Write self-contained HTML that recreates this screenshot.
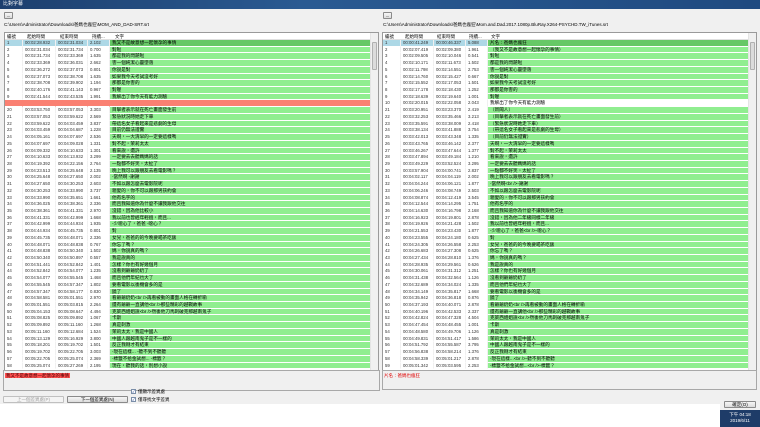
<!DOCTYPE html>
<html><head><meta charset="utf-8">
<style>
*{margin:0;padding:0;box-sizing:border-box}
body{width:760px;height:427px;overflow:hidden;background:#f0f0f0;font-family:"Liberation Sans","Noto Sans CJK TC",sans-serif;font-size:5px;color:#000;position:relative}
.abs{position:absolute}
.title{left:0;top:0;width:760px;height:9px;background:linear-gradient(90deg,#1d3f6e,#2a5a92 40%,#1f4a80);color:#fff;font-size:5px;line-height:9px;padding-left:3px}
.btn{border:1px solid #8a8a8a;border-radius:1px;background:linear-gradient(#f6f6f6,#dcdcdc);text-align:center;line-height:6px;font-size:4.5px}
.path{font-size:4.5px;line-height:6px}
.list{background:#fff;border:1px solid #9a9a9a;overflow:hidden}
table,tbody{display:block;position:absolute;left:0;top:7px}
tbody{position:static}
colgroup{display:none}
tr{display:flex;height:6.72px;overflow:hidden}
td{display:block;flex:none;height:6.72px;line-height:6.2px;font-size:4.3px;white-space:nowrap;overflow:hidden;padding-left:2px;border-right:1px solid #f0f0f0;border-bottom:0.6px solid #fff;color:#333}
td:nth-child(1){width:18px}
td:nth-child(2){width:33px}
td:nth-child(3){width:32px}
td:nth-child(4){width:22px}
td:nth-child(5){width:261px}
td.g{background:#90ee90;color:#000;font-size:4.6px}
tr.sel td{background:#add8e6}
tr.sel td.g{background:#66c866}
tr.red td{background:#fa8072;border-right-color:#fa8072}
tr.w td.g{background:#fff}
.hdr{position:absolute;left:0;top:0;height:7px;width:100%;background:#fff;border-bottom:1px solid #e0e0e0;font-size:4.5px;line-height:7px}
.hdr span{position:absolute;top:0}
.sb{position:absolute;top:0;right:0;width:8px;height:100%;background:#f0f0f0;border-left:1px solid #e4e4e4}
.sb i{position:absolute;left:1px;top:9px;width:5px;height:28px;background:#dcdcdc;border:1px solid #b0b0b0;border-radius:1px}
.box{background:#f0f0f0;border:1px solid #a8a8a8}
.cb{width:5px;height:5px;border:1px solid #7a8ea8;background:#fff;color:#2a4a9a;font-size:4px;line-height:4px;text-align:center}
</style></head><body>
<div class="abs title">比對字幕</div>

<div class="abs btn" style="left:4px;top:12px;width:9px;height:7px">...</div>
<div class="abs path" style="left:4px;top:22px">C:\Users\Administrator\Downloads\爸媽也瘋狂\MOM_AND_DAD-SRT.srt</div>
<div class="abs btn" style="left:383px;top:12px;width:9px;height:7px">...</div>
<div class="abs path" style="left:383px;top:22px">C:\Users\Administrator\Downloads\爸媽也瘋狂\Mom.and.Dad.2017.1080p.BluRay.X264-PSYCHD.TW_iTunes.srt</div>

<!-- Left list -->
<div class="abs list" style="left:4px;top:32px;width:375px;height:339px">
<div class="hdr"><span style="left:2px">編號</span><span style="left:22px">起始時間</span><span style="left:55px">結束時間</span><span style="left:87px">持續...</span><span style="left:110px">文字</span></div>
<table>
<tr class="sel"><td>1<td>00:02:28.932<td>00:02:31.034<td>2.102<td class="g">我又不是故意想一起懷孕的事情</tr>
<tr><td>2<td>00:02:31.034<td>00:02:31.734<td>0.700<td class="g">對啦</tr>
<tr><td>3<td>00:02:31.734<td>00:02:33.369<td>1.635<td class="g">都是我的問題啦</tr>
<tr><td>4<td>00:02:33.369<td>00:02:36.031<td>2.662<td class="g">害一個純潔心靈墮落</tr>
<tr><td>5<td>00:02:36.272<td>00:02:37.073<td>0.801<td class="g">你說是對</tr>
<tr><td>6<td>00:02:37.073<td>00:02:38.708<td>1.635<td class="g">如果我今天考試沒考好</tr>
<tr><td>7<td>00:02:38.708<td>00:02:39.902<td>1.194<td class="g">那都是你害的</tr>
<tr><td>8<td>00:02:40.176<td>00:02:41.143<td>0.967<td class="g">對喔</tr>
<tr><td>9<td>00:02:41.544<td>00:02:43.535<td>1.991<td class="g">我解出了你今天有能力測驗</tr>
<tr class="red"><td><td><td><td><td class="g" style="background:#fa8072"></tr>
<tr><td>20<td>00:03:53.750<td>00:03:57.053<td>3.303<td class="g">目擊者表示就在死亡畫面發生前</tr>
<tr><td>21<td>00:03:57.053<td>00:03:59.622<td>2.569<td class="g">緊急狀況時她走下車</tr>
<tr><td>22<td>00:03:59.622<td>00:04:03.459<td>3.837<td class="g">帶這名女子看起來是悲劇的生母</tr>
<tr><td>23<td>00:04:03.459<td>00:04:04.687<td>1.228<td class="g">目前仍無法證實</tr>
<tr><td>24<td>00:04:05.161<td>00:04:07.697<td>2.536<td class="g">天啊，一大清早的一定要這樣嗎</tr>
<tr><td>25<td>00:04:07.697<td>00:04:09.028<td>1.331<td class="g">對不起，茉莉太太</tr>
<tr><td>26<td>00:04:09.332<td>00:04:10.633<td>1.301<td class="g">看來說，還許</tr>
<tr><td>27<td>00:04:10.633<td>00:04:13.932<td>3.299<td class="g">一定要去去聽媽媽的話</tr>
<tr><td>28<td>00:04:19.392<td>00:04:22.156<td>2.764<td class="g">一點都不好笑，太扯了</tr>
<tr><td>29<td>00:04:23.513<td>00:04:25.648<td>2.135<td class="g">晚上我可以跟朋友去看電影嗎？</tr>
<tr><td>30<td>00:04:25.648<td>00:04:27.650<td>2.002<td class="g">-當然啊 -謝謝</tr>
<tr><td>31<td>00:04:27.650<td>00:04:30.253<td>2.603<td class="g">不如以跟怎麼去電影院呢</tr>
<tr><td>32<td>00:04:30.253<td>00:04:33.990<td>3.737<td class="g">親愛的，你不可以跟那男孩約會</tr>
<tr><td>33<td>00:04:33.990<td>00:04:35.651<td>1.661<td class="g">他有名字的</tr>
<tr><td>34<td>00:04:36.025<td>00:04:38.361<td>2.336<td class="g">而且我知道你為什麼不讓我跟他交往</tr>
<tr><td>35<td>00:04:38.361<td>00:04:41.331<td>2.970<td class="g">沒錯，因為他比較小</tr>
<tr><td>36<td>00:04:41.331<td>00:04:42.999<td>1.668<td class="g">我以前也曾經年輕過，而且...</tr>
<tr><td>37<td>00:04:42.999<td>00:04:44.934<td>1.935<td class="g">-少噁心了，爸爸 -噁心？</tr>
<tr><td>38<td>00:04:44.934<td>00:04:45.735<td>0.801<td class="g">對</tr>
<tr><td>39<td>00:04:45.735<td>00:04:48.071<td>2.336<td class="g">女兒，爸爸的的今晚要喝茶吃飯</tr>
<tr><td>40<td>00:04:48.071<td>00:04:48.838<td>0.767<td class="g">你忘了嗎？</tr>
<tr><td>41<td>00:04:48.838<td>00:04:50.340<td>1.502<td class="g">媽，你說真的嗎？</tr>
<tr><td>42<td>00:04:50.340<td>00:04:50.897<td>0.557<td class="g">我是說真的</tr>
<tr><td>43<td>00:04:51.441<td>00:04:52.842<td>1.401<td class="g">怎樣？你也有好幾個月</tr>
<tr><td>44<td>00:04:52.842<td>00:04:54.077<td>1.235<td class="g">沒看到爺爺奶奶了</tr>
<tr><td>45<td>00:04:54.077<td>00:04:55.545<td>1.468<td class="g">而且他們年紀也大了</tr>
<tr><td>46<td>00:04:55.545<td>00:04:57.347<td>1.802<td class="g">要看電影以後機會多的是</tr>
<tr><td>47<td>00:04:57.347<td>00:04:58.177<td>0.830<td class="g">饒了</tr>
<tr><td>48<td>00:04:58.581<td>00:05:01.551<td>2.970<td class="g">看爺爺奶奶&lt;br /&gt;再看被動的畫面人格在轉折喻</tr>
<tr><td>49<td>00:05:01.551<td>00:05:03.815<td>2.264<td class="g">還有爺爺一直講他&lt;br /&gt;那些精彩的越戰故事</tr>
<tr><td>50<td>00:05:04.153<td>00:05:08.647<td>4.494<td class="g">克萊西姐姐說&lt;br /&gt;然後他刀馬刺破克那越南鬼子</tr>
<tr><td>51<td>00:05:08.825<td>00:05:09.892<td>1.067<td class="g">卡斯</tr>
<tr><td>52<td>00:05:09.892<td>00:05:11.160<td>1.268<td class="g">真是刺激</tr>
<tr><td>53<td>00:05:11.160<td>00:05:12.684<td>1.524<td class="g">茉莉太太，我是中國人</tr>
<tr><td>54<td>00:05:13.129<td>00:05:16.929<td>3.800<td class="g">中國人跟越南鬼子是不一樣的</tr>
<tr><td>55<td>00:05:18.201<td>00:05:19.702<td>1.501<td class="g">反正我剛才有結束</tr>
<tr><td>56<td>00:05:19.702<td>00:05:22.705<td>3.003<td class="g">-現在這樣... -聽不到不聽聽</tr>
<tr><td>57<td>00:05:22.705<td>00:05:25.074<td>2.369<td class="g">-標籤不拾金試想... -標籤？</tr>
<tr><td>58<td>00:05:25.074<td>00:05:27.269<td>2.195<td class="g">現在，聽我的話，別想小說</tr>
</table>
<div class="sb"><i></i></div>
</div>

<!-- Right list -->
<div class="abs list" style="left:382px;top:32px;width:375px;height:339px">
<div class="hdr"><span style="left:2px">編號</span><span style="left:22px">起始時間</span><span style="left:54px">結束時間</span><span style="left:86px">持續...</span><span style="left:108px">文字</span></div>
<table>
<tr class="sel"><td>1<td>00:00:41.249<td>00:00:46.337<td>5.088<td class="g">片名：爸媽也瘋狂</tr>
<tr><td>2<td>00:02:07.419<td>00:02:09.380<td>1.961<td class="g">（我又不是故意想一起懷孕的事情）</tr>
<tr><td>3<td>00:02:09.505<td>00:02:10.046<td>0.541<td class="g">對啦</tr>
<tr><td>4<td>00:02:10.171<td>00:02:11.673<td>1.502<td class="g">都是我的問題啦</tr>
<tr><td>5<td>00:02:11.798<td>00:02:14.551<td>2.753<td class="g">害一個純潔心靈墮落</tr>
<tr><td>6<td>00:02:14.760<td>00:02:15.427<td>0.667<td class="g">你說是對</tr>
<tr><td>7<td>00:02:15.552<td>00:02:17.053<td>1.501<td class="g">如果我今天考試沒考好</tr>
<tr><td>8<td>00:02:17.178<td>00:02:18.430<td>1.252<td class="g">那都是你害的</tr>
<tr><td>9<td>00:02:18.639<td>00:02:19.640<td>1.001<td class="g">對喔</tr>
<tr class="w"><td>10<td>00:02:20.015<td>00:02:22.058<td>2.043<td class="g">我解出了你今天有能力測驗</tr>
<tr><td>21<td>00:03:20.951<td>00:03:23.370<td>2.419<td class="g">（新聞人）</tr>
<tr><td>22<td>00:03:32.253<td>00:03:35.466<td>3.213<td class="g">（目擊者表示就在死亡畫面發生前）</tr>
<tr><td>23<td>00:03:35.591<td>00:03:38.009<td>2.418<td class="g">（緊急狀況時她走下車）</tr>
<tr><td>24<td>00:03:38.134<td>00:03:41.888<td>3.754<td class="g">（帶這名女子看起來是悲劇的生母）</tr>
<tr><td>25<td>00:03:42.013<td>00:03:43.348<td>1.335<td class="g">（目前仍無法證實）</tr>
<tr><td>26<td>00:03:43.765<td>00:03:46.142<td>2.377<td class="g">天啊，一大清早的一定要這樣嗎</tr>
<tr><td>27<td>00:03:46.267<td>00:03:47.644<td>1.377<td class="g">對不起，茉莉太太</tr>
<tr><td>28<td>00:03:47.894<td>00:03:49.184<td>1.210<td class="g">看來說，還許</tr>
<tr><td>29<td>00:03:49.229<td>00:03:52.524<td>3.295<td class="g">一定要去去聽媽媽的話</tr>
<tr><td>30<td>00:03:57.904<td>00:04:00.741<td>2.837<td class="g">一點都不好笑，太扯了</tr>
<tr><td>31<td>00:04:02.117<td>00:04:04.119<td>2.002<td class="g">晚上我可以跟朋友去看電影嗎？</tr>
<tr><td>32<td>00:04:04.244<td>00:04:06.121<td>1.877<td class="g">-當然啊&lt;br /&gt;-謝謝</tr>
<tr><td>33<td>00:04:06.246<td>00:04:08.749<td>2.503<td class="g">不如以跟怎麼去電影院呢</tr>
<tr><td>34<td>00:04:08.874<td>00:04:12.419<td>3.545<td class="g">親愛的，你不可以跟那男孩約會</tr>
<tr><td>35<td>00:04:12.544<td>00:04:14.295<td>1.751<td class="g">他有名字的</tr>
<tr><td>36<td>00:04:14.630<td>00:04:16.798<td>2.168<td class="g">而且我知道你為什麼不讓我跟他交往</tr>
<tr><td>37<td>00:04:16.923<td>00:04:19.801<td>2.878<td class="g">沒錯，因為他二年級同樣二年級</tr>
<tr><td>38<td>00:04:19.926<td>00:04:21.428<td>1.502<td class="g">我以前也曾經年輕過，而且...</tr>
<tr><td>39<td>00:04:21.553<td>00:04:23.430<td>1.877<td class="g">-少噁心了，爸爸&lt;br /&gt;-噁心？</tr>
<tr><td>40<td>00:04:23.555<td>00:04:24.180<td>0.625<td class="g">對</tr>
<tr><td>41<td>00:04:24.305<td>00:04:26.558<td>2.253<td class="g">女兒，爸爸的的今晚要喝茶吃飯</tr>
<tr><td>42<td>00:04:26.683<td>00:04:27.308<td>0.625<td class="g">你忘了嗎？</tr>
<tr><td>43<td>00:04:27.434<td>00:04:28.810<td>1.376<td class="g">媽，你說真的嗎？</tr>
<tr><td>44<td>00:04:28.935<td>00:04:29.561<td>0.626<td class="g">我是說真的</tr>
<tr><td>45<td>00:04:30.061<td>00:04:31.312<td>1.251<td class="g">怎樣？你也有好幾個月</tr>
<tr><td>46<td>00:04:31.438<td>00:04:32.564<td>1.126<td class="g">沒看到爺爺奶奶了</tr>
<tr><td>47<td>00:04:32.689<td>00:04:34.024<td>1.335<td class="g">而且他們年紀也大了</tr>
<tr><td>48<td>00:04:34.149<td>00:04:35.817<td>1.668<td class="g">要看電影以後機會多的是</tr>
<tr><td>49<td>00:04:35.942<td>00:04:36.818<td>0.876<td class="g">饒了</tr>
<tr><td>50<td>00:04:37.193<td>00:04:40.071<td>2.878<td class="g">看爺爺奶奶&lt;br /&gt;再看被動的畫面人格在轉折喻</tr>
<tr><td>51<td>00:04:40.196<td>00:04:42.533<td>2.337<td class="g">還有爺爺一直講他&lt;br /&gt;那些精彩的越戰故事</tr>
<tr><td>52<td>00:04:42.824<td>00:04:47.328<td>4.504<td class="g">克萊西姐姐說&lt;br /&gt;然後他刀馬刺破克那越南鬼子</tr>
<tr><td>53<td>00:04:47.454<td>00:04:48.455<td>1.001<td class="g">卡斯</tr>
<tr><td>54<td>00:04:48.580<td>00:04:49.706<td>1.126<td class="g">真是刺激</tr>
<tr><td>55<td>00:04:49.831<td>00:04:51.417<td>1.586<td class="g">茉莉太太，我是中國人</tr>
<tr><td>56<td>00:04:51.792<td>00:04:55.587<td>3.795<td class="g">中國人跟越南鬼子是不一樣的</tr>
<tr><td>57<td>00:04:56.838<td>00:04:58.214<td>1.376<td class="g">反正我剛才有結束</tr>
<tr><td>58<td>00:04:58.339<td>00:05:01.217<td>2.878<td class="g">-現在這樣...&lt;br /&gt;-聽不到不聽聽</tr>
<tr><td>59<td>00:05:01.342<td>00:05:03.595<td>2.253<td class="g">-標籤不拾金試想...&lt;br /&gt;-標籤？</tr>
</table>
<div class="sb"><i></i></div>
</div>

<!-- status boxes -->
<div class="abs box" style="left:3px;top:370px;width:377px;height:21px"><span style="position:absolute;left:1px;top:2px;background:#ff5050;color:#400;font-size:4.5px;line-height:5px;padding:0 1px">我又不是故意想一起懷孕的事情</span></div>
<div class="abs box" style="left:382px;top:370px;width:375px;height:20px"><span style="position:absolute;left:1px;top:2px;color:#e00000;font-size:4.5px;line-height:5px">片名：爸媽也瘋狂</span></div>

<!-- bottom controls -->
<div class="abs btn" style="left:3px;top:396px;width:61px;height:7px;color:#a0a0a0;border-color:#c0c0c0;background:#f4f4f4">上一個差異處(P)</div>
<div class="abs btn" style="left:67px;top:396px;width:61px;height:7px">下一個差異處(N)</div>
<div class="abs cb" style="left:131px;top:389px">✓</div><div class="abs" style="left:138px;top:388.5px;font-size:4.5px">僅顯示差異處</div>
<div class="abs cb" style="left:131px;top:397px">✓</div><div class="abs" style="left:138px;top:396.5px;font-size:4.5px">僅尋找文字差異</div>

<div class="abs" style="left:0;top:404px;width:720px;height:23px;background:#fff"></div>
<div class="abs btn" style="left:724px;top:401px;width:32px;height:7px">確定(O)</div>
<div class="abs" style="left:720px;top:410px;width:40px;height:17px;background:#1e3c68;color:#fff;font-size:4.5px;line-height:6px;text-align:center;padding-top:2px">下午 04:18<br>2019/6/11</div>
</body></html>
